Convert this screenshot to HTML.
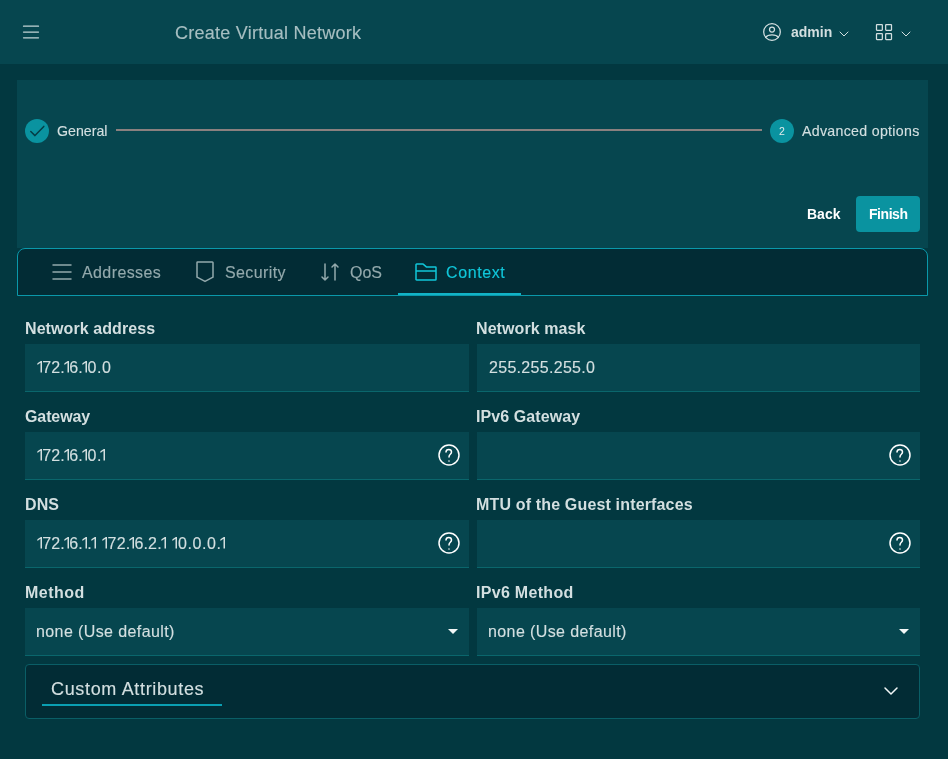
<!DOCTYPE html>
<html><head><meta charset="utf-8">
<style>
*{box-sizing:border-box;margin:0;padding:0}
html,body{width:948px;height:759px;overflow:hidden}
body{background:#023840;font-family:"Liberation Sans",sans-serif;position:relative;color:#d6e1e2}
.abs{position:absolute}
.t{position:absolute;white-space:nowrap;line-height:1}
#hdr{left:0;top:0;width:948px;height:64px;background:#06464f}
#panel{left:17px;top:80px;width:911px;height:168px;background:#06464f}
#tabs{left:17px;top:248px;width:911px;height:48px;background:#022c35;border:1px solid #0a98aa;border-radius:8px 8px 0 0}
.inp{position:absolute;height:48px;background:#06464f;border-bottom:1px solid #0a666c}
.lbl{margin-top:.6px;position:absolute;white-space:nowrap;line-height:1;font-weight:bold;font-size:16px;color:#d3dfe0;letter-spacing:.08px}
.val{position:absolute;white-space:nowrap;line-height:1;font-size:16px;color:#d3dfe0;letter-spacing:.3px}
.ip{letter-spacing:.12px;word-spacing:2.7px}
.o{position:static;display:inline-block;vertical-align:.7px;fill:#d3dfe0;margin-left:-1.2px;overflow:visible}
.z{margin:0 .45px}
.t,.lbl,.val{will-change:transform}
.val,.rg{-webkit-text-stroke:.15px currentColor}
svg{position:absolute;overflow:visible}
</style></head><body>
<div id="hdr" class="abs"></div>
<!-- hamburger -->
<svg style="left:21px;top:22px" width="20" height="20" viewBox="0 0 24 24" fill="none" stroke="#c2d4d6" stroke-width="1.5" stroke-linecap="round"><path d="M3 5h18M3 12h18M3 19h18"/></svg>
<div class="t rg" id="title" style="left:175px;top:24px;font-size:18px;color:#a6bec1;letter-spacing:.25px">Create Virtual Network</div>
<!-- user -->
<svg style="left:762px;top:22px" width="20" height="20" viewBox="0 0 24 24" fill="none" stroke="#d3dfe0" stroke-width="1.5" stroke-linecap="round" stroke-linejoin="round"><circle cx="12" cy="12" r="10"/><path d="M4.271 18.346S6.5 15.5 12 15.5s7.73 2.846 7.73 2.846"/><circle cx="12" cy="9" r="3"/></svg>
<div class="t" id="admin" style="left:790.5px;top:25px;font-size:14px;font-weight:bold;color:#d3dfe0">admin</div>
<svg style="left:836px;top:25.7px" width="16" height="16" viewBox="0 0 24 24" fill="none" stroke="#d3dfe0" stroke-width="1.5" stroke-linecap="round" stroke-linejoin="round"><path d="M6 9l6 6 6-6"/></svg>
<svg style="left:874px;top:22px" width="20" height="20" viewBox="0 0 24 24" fill="none" stroke="#d3dfe0" stroke-width="1.5"><rect x="3" y="3" width="7" height="7" rx=".6"/><rect x="14" y="3" width="7" height="7" rx=".6"/><rect x="3" y="14" width="7" height="7" rx=".6"/><rect x="14" y="14" width="7" height="7" rx=".6"/></svg>
<svg style="left:898.3px;top:25.7px" width="16" height="16" viewBox="0 0 24 24" fill="none" stroke="#d3dfe0" stroke-width="1.5" stroke-linecap="round" stroke-linejoin="round"><path d="M6 9l6 6 6-6"/></svg>

<div id="panel" class="abs"></div>
<!-- step 1 -->
<svg style="left:25px;top:119px" width="24" height="24" viewBox="0 0 24 24"><circle cx="12" cy="12" r="12" fill="#0a93a0"/><path d="M5.8 12.5l4.2 4.1L18.8 7.4" fill="none" stroke="#053d46" stroke-width="1.5" stroke-linecap="round" stroke-linejoin="round"/></svg>
<div class="t rg" id="s1" style="left:57px;top:124px;font-size:14.2px;color:#d3dfe0">General</div>
<div class="abs" style="left:116px;top:129px;width:646px;height:2px;background:#8a807f"></div>
<div class="abs" style="left:770px;top:119px;width:24px;height:24px;border-radius:50%;background:#0a93a0"></div>
<div class="t" id="s2n" style="left:770px;top:126px;width:24px;text-align:center;font-size:10.5px;color:#e3ecec">2</div>
<div class="t rg" id="s2" style="left:802px;top:124px;font-size:14.2px;color:#d3dfe0;letter-spacing:.3px">Advanced options</div>
<!-- buttons -->
<div class="t" id="back" style="left:807px;top:207px;font-size:14px;font-weight:bold;color:#fff">Back</div>
<div class="abs" style="left:856px;top:196px;width:64px;height:36px;border-radius:4px;background:#0a93a0"></div>
<div class="t" id="finish" style="left:868.5px;top:207px;font-size:14px;font-weight:bold;color:#fff;letter-spacing:-.45px">Finish</div>

<!-- tabs -->
<div id="tabs" class="abs"></div>
<svg style="left:50px;top:260px" width="24" height="24" viewBox="0 0 24 24" fill="none" stroke="#93a9ac" stroke-width="1.5" stroke-linecap="round"><path d="M3 5h18M3 12h18M3 19h18"/></svg>
<div class="t rg" id="tb1" style="left:82px;top:265px;font-size:16px;color:#93a9ac;letter-spacing:.4px">Addresses</div>
<svg style="left:193px;top:260px" width="24" height="24" viewBox="0 0 24 24" fill="none" stroke="#93a9ac" stroke-width="1.5" stroke-linecap="round" stroke-linejoin="round"><path d="M4.6 2h14.8a.6.6 0 01.6.6V17.2L12 21.4 4 17.2V2.6a.6.6 0 01.6-.6z"/></svg>
<div class="t rg" id="tb2" style="left:225px;top:265px;font-size:16px;color:#93a9ac;letter-spacing:.4px">Security</div>
<svg style="left:318px;top:260px" width="24" height="24" viewBox="0 0 24 24" fill="none" stroke="#93a9ac" stroke-width="1.5" stroke-linecap="round" stroke-linejoin="round"><path d="M17 20V4m0 0l3 3m-3-3l-3 3M7 4v16m0 0l3-3m-3 3l-3-3"/></svg>
<div class="t rg" id="tb3" style="left:350px;top:265px;font-size:16px;color:#93a9ac">QoS</div>
<svg style="left:414px;top:260px" width="24" height="24" viewBox="0 0 24 24" fill="none" stroke="#10c6d9" stroke-width="1.5" stroke-linecap="round" stroke-linejoin="round"><path d="M2 11V4.6a.6.6 0 01.6-.6h6.178a.6.6 0 01.39.144l3.164 2.712a.6.6 0 00.39.144H21.4a.6.6 0 01.6.6V11M2 11v8.4a.6.6 0 00.6.6h18.8a.6.6 0 00.6-.6V11M2 11h20"/></svg>
<div class="t rg" id="tb4" style="left:446px;top:265px;font-size:16px;color:#10c6d9;letter-spacing:.6px">Context</div>
<div class="abs" style="left:398px;top:293px;width:123px;height:2px;background:#12b3c7"></div>

<!-- form -->
<div class="lbl" style="left:24.6px;top:320px">Network address</div>
<div class="inp" style="left:25px;top:344px;width:444px"></div>
<div class="val ip" style="left:38px;top:360px"><svg class="o" width="5.5" height="11.5" viewBox="0 0 5.5 11.5"><path d="M5 0H3.8L.4 2.3V3.95L3.5 1.85V11.5H5z"/></svg>72.<svg class="o" width="5.5" height="11.5" viewBox="0 0 5.5 11.5"><path d="M5 0H3.8L.4 2.3V3.95L3.5 1.85V11.5H5z"/></svg>6.<svg class="o" width="5.5" height="11.5" viewBox="0 0 5.5 11.5"><path d="M5 0H3.8L.4 2.3V3.95L3.5 1.85V11.5H5z"/></svg><span class="z">0</span>.<span class="z">0</span></div>
<div class="lbl" style="left:476.3px;top:320px">Network mask</div>
<div class="inp" style="left:477px;top:344px;width:443px"></div>
<div class="val" style="left:488.5px;top:360px">255.255.255.0</div>

<div class="lbl" style="left:24.6px;top:408px;letter-spacing:-.1px">Gateway</div>
<div class="inp" style="left:25px;top:432px;width:444px"></div>
<div class="val ip" style="left:38px;top:448px"><svg class="o" width="5.5" height="11.5" viewBox="0 0 5.5 11.5"><path d="M5 0H3.8L.4 2.3V3.95L3.5 1.85V11.5H5z"/></svg>72.<svg class="o" width="5.5" height="11.5" viewBox="0 0 5.5 11.5"><path d="M5 0H3.8L.4 2.3V3.95L3.5 1.85V11.5H5z"/></svg>6.<svg class="o" width="5.5" height="11.5" viewBox="0 0 5.5 11.5"><path d="M5 0H3.8L.4 2.3V3.95L3.5 1.85V11.5H5z"/></svg><span class="z">0</span>.<svg class="o" width="5.5" height="11.5" viewBox="0 0 5.5 11.5"><path d="M5 0H3.8L.4 2.3V3.95L3.5 1.85V11.5H5z"/></svg></div>
<div class="lbl" style="left:476.3px;top:408px">IPv6 Gateway</div>
<div class="inp" style="left:477px;top:432px;width:443px"></div>

<div class="lbl" style="left:24.6px;top:496px">DNS</div>
<div class="inp" style="left:25px;top:520px;width:444px"></div>
<div class="val ip" style="left:38px;top:536px"><svg class="o" width="5.5" height="11.5" viewBox="0 0 5.5 11.5"><path d="M5 0H3.8L.4 2.3V3.95L3.5 1.85V11.5H5z"/></svg>72.<svg class="o" width="5.5" height="11.5" viewBox="0 0 5.5 11.5"><path d="M5 0H3.8L.4 2.3V3.95L3.5 1.85V11.5H5z"/></svg>6.<svg class="o" width="5.5" height="11.5" viewBox="0 0 5.5 11.5"><path d="M5 0H3.8L.4 2.3V3.95L3.5 1.85V11.5H5z"/></svg>.<svg class="o" width="5.5" height="11.5" viewBox="0 0 5.5 11.5"><path d="M5 0H3.8L.4 2.3V3.95L3.5 1.85V11.5H5z"/></svg> <svg class="o" width="5.5" height="11.5" viewBox="0 0 5.5 11.5"><path d="M5 0H3.8L.4 2.3V3.95L3.5 1.85V11.5H5z"/></svg>72.<svg class="o" width="5.5" height="11.5" viewBox="0 0 5.5 11.5"><path d="M5 0H3.8L.4 2.3V3.95L3.5 1.85V11.5H5z"/></svg>6.2.<svg class="o" width="5.5" height="11.5" viewBox="0 0 5.5 11.5"><path d="M5 0H3.8L.4 2.3V3.95L3.5 1.85V11.5H5z"/></svg> <svg class="o" width="5.5" height="11.5" viewBox="0 0 5.5 11.5"><path d="M5 0H3.8L.4 2.3V3.95L3.5 1.85V11.5H5z"/></svg><span class="z">0</span>.<span class="z">0</span>.<span class="z">0</span>.<svg class="o" width="5.5" height="11.5" viewBox="0 0 5.5 11.5"><path d="M5 0H3.8L.4 2.3V3.95L3.5 1.85V11.5H5z"/></svg></div>
<div class="lbl" style="left:476.3px;top:496px;letter-spacing:.16px">MTU of the Guest interfaces</div>
<div class="inp" style="left:477px;top:520px;width:443px"></div>

<div class="lbl" style="left:24.6px;top:584px;letter-spacing:.5px">Method</div>
<div class="inp" style="left:25px;top:608px;width:444px"></div>
<div class="val" style="left:36.4px;top:624px;letter-spacing:.4px">none (Use default)</div>
<div class="lbl" style="left:476.3px;top:584px;letter-spacing:.3px">IPv6 Method</div>
<div class="inp" style="left:477px;top:608px;width:443px"></div>
<div class="val" style="left:488px;top:624px;letter-spacing:.4px">none (Use default)</div>

<!-- help icons -->
<svg class="help" style="left:437px;top:443px" width="24" height="24" viewBox="0 0 24 24" fill="none" stroke="#ffffff" stroke-width="1.5" stroke-linecap="round" stroke-linejoin="round"><circle cx="12" cy="12" r="10"/><path d="M9 9c0-3.5 5.5-3.5 5.5 0 0 2.5-2.5 2-2.5 5M12 18.01l.01-.011"/></svg>
<svg class="help" style="left:888px;top:443px" width="24" height="24" viewBox="0 0 24 24" fill="none" stroke="#ffffff" stroke-width="1.5" stroke-linecap="round" stroke-linejoin="round"><circle cx="12" cy="12" r="10"/><path d="M9 9c0-3.5 5.5-3.5 5.5 0 0 2.5-2.5 2-2.5 5M12 18.01l.01-.011"/></svg>
<svg class="help" style="left:437px;top:531px" width="24" height="24" viewBox="0 0 24 24" fill="none" stroke="#ffffff" stroke-width="1.5" stroke-linecap="round" stroke-linejoin="round"><circle cx="12" cy="12" r="10"/><path d="M9 9c0-3.5 5.5-3.5 5.5 0 0 2.5-2.5 2-2.5 5M12 18.01l.01-.011"/></svg>
<svg class="help" style="left:888px;top:531px" width="24" height="24" viewBox="0 0 24 24" fill="none" stroke="#ffffff" stroke-width="1.5" stroke-linecap="round" stroke-linejoin="round"><circle cx="12" cy="12" r="10"/><path d="M9 9c0-3.5 5.5-3.5 5.5 0 0 2.5-2.5 2-2.5 5M12 18.01l.01-.011"/></svg>
<!-- select arrows -->
<svg style="left:441px;top:619px" width="24" height="24" viewBox="0 0 24 24" fill="#f2f7f7"><path d="M7 10l5 5 5-5z"/></svg>
<svg style="left:892px;top:619px" width="24" height="24" viewBox="0 0 24 24" fill="#f2f7f7"><path d="M7 10l5 5 5-5z"/></svg>

<!-- accordion -->
<div class="abs" style="left:25px;top:664px;width:895px;height:55px;background:#022c35;border:1px solid #0a5e66;border-radius:4px"></div>
<div class="t rg" id="ca" style="left:50.7px;top:680px;font-size:18px;color:#d3dfe0;letter-spacing:.66px">Custom Attributes</div>
<div class="abs" style="left:42px;top:704px;width:180px;height:2px;background:#0a9fb2"></div>
<svg style="left:879px;top:679px" width="24" height="24" viewBox="0 0 24 24" fill="none" stroke="#f2f7f7" stroke-width="1.5" stroke-linecap="round" stroke-linejoin="round"><path d="M6 9l6 6 6-6"/></svg>
</body></html>
